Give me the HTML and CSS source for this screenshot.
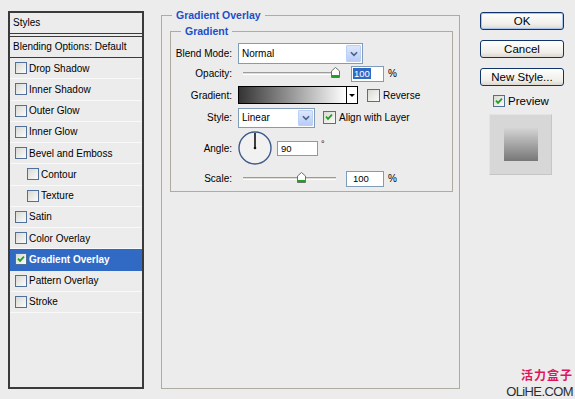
FILE: index.html
```html
<!DOCTYPE html>
<html lang="en">
<head>
    <meta charset="UTF-8">
    <meta name="viewport" content="width=device-width, initial-scale=1.0">
    <title>Layer Style</title>
    <link rel="stylesheet" href="styles.css">
</head>
<body>

    <div class="dialog">

        <!-- Lista de estilos -->
        <div class="styles-list">
            <div class="list-head">Styles</div>
            <div class="list-blend">Blending Options: Default</div>
            <div class="list-item"><span class="check"></span>Drop Shadow</div>
            <div class="list-item"><span class="check"></span>Inner Shadow</div>
            <div class="list-item"><span class="check"></span>Outer Glow</div>
            <div class="list-item"><span class="check"></span>Inner Glow</div>
            <div class="list-item"><span class="check"></span>Bevel and Emboss</div>
            <div class="list-item sub"><span class="check"></span>Contour</div>
            <div class="list-item sub"><span class="check"></span>Texture</div>
            <div class="list-item"><span class="check"></span>Satin</div>
            <div class="list-item"><span class="check"></span>Color Overlay</div>
            <div class="list-item active">
                <span class="check"><svg viewBox="0 0 11 11"><path d="M2.2 5.2 L4.4 7.6 L8.8 2.8" /></svg></span>Gradient Overlay
            </div>
            <div class="list-item"><span class="check"></span>Pattern Overlay</div>
            <div class="list-item"><span class="check"></span>Stroke</div>
        </div>

        <!-- Configurações -->
        <fieldset class="group outer">
            <legend>Gradient Overlay</legend>
            <fieldset class="group inner">
                <legend>Gradient</legend>

                <div class="row row-blend">
                    <label>Blend Mode:</label>
                    <div class="select select-blend">
                        <span>Normal</span>
                        <span class="drop"><svg viewBox="0 0 9 6"><path d="M1 1 L4.5 4.5 L8 1" /></svg></span>
                    </div>
                </div>

                <div class="row row-opacity">
                    <label>Opacity:</label>
                    <div class="slider">
                        <span class="track"></span>
                        <span class="thumb thumb-opacity"><svg viewBox="0 0 9 11"><polygon points="0.5,4 4.5,0.5 8.5,4 8.5,10.5 0.5,10.5" /><rect x="1" y="8" width="7" height="2" /></svg></span>
                    </div>
                    <div class="field field-opacity"><span class="selected">100</span></div>
                    <span class="unit">%</span>
                </div>

                <div class="row row-gradient">
                    <label>Gradient:</label>
                    <div class="gradient-box">
                        <span class="ramp"></span>
                        <span class="arrow"></span>
                    </div>
                    <span class="check reverse"></span>
                    <span>Reverse</span>
                </div>

                <div class="row row-style">
                    <label>Style:</label>
                    <div class="select select-style">
                        <span>Linear</span>
                        <span class="drop"><svg viewBox="0 0 9 6"><path d="M1 1 L4.5 4.5 L8 1" /></svg></span>
                    </div>
                    <span class="check align"><svg viewBox="0 0 11 11"><path d="M2.2 5.2 L4.4 7.6 L8.8 2.8" /></svg></span>
                    <span>Align with Layer</span>
                </div>

                <div class="row row-angle">
                    <label>Angle:</label>
                    <svg class="dial" viewBox="0 0 34 34">
                        <circle cx="17" cy="17" r="16" class="dial-ring" />
                        <line x1="17" y1="17" x2="17" y2="2" class="dial-hand" />
                        <circle cx="17" cy="17" r="1.3" class="dial-dot" />
                    </svg>
                    <div class="field field-angle">90</div>
                    <span class="deg">&deg;</span>
                </div>

                <div class="row row-scale">
                    <label>Scale:</label>
                    <div class="slider">
                        <span class="track"></span>
                        <span class="thumb thumb-scale"><svg viewBox="0 0 9 11"><polygon points="0.5,4 4.5,0.5 8.5,4 8.5,10.5 0.5,10.5" /><rect x="1" y="8" width="7" height="2" /></svg></span>
                    </div>
                    <div class="field field-scale">100</div>
                    <span class="unit">%</span>
                </div>

            </fieldset>
        </fieldset>

        <!-- Botões -->
        <div class="actions">
            <button class="btn btn-default">OK</button>
            <button class="btn">Cancel</button>
            <button class="btn">New Style...</button>
            <div class="preview-check">
                <span class="check"><svg viewBox="0 0 11 11"><path d="M2.2 5.2 L4.4 7.6 L8.8 2.8" /></svg></span>Preview
            </div>
            <div class="preview-box">
                <span class="swatch"></span>
            </div>
        </div>

    </div>

    <div class="watermark">
        <div class="wm-cn">活力盒子</div>
        <div class="wm-en">OLiHE.COM</div>
    </div>

</body>
</html>
```

FILE: styles.css
```css
* {
    margin: 0;
    padding: 0;
    box-sizing: border-box;
}

body {
    width: 575px;
    height: 399px;
    overflow: hidden;
    position: relative;
    background-color: #ececec;
    color: #000;
    font-family: "Liberation Sans", Arial, sans-serif;
    font-size: 10px;
}

.dialog {
    display: flex;
    align-items: stretch;
    padding: 9px 0 0 8px;
}

/* Lista de estilos */
.styles-list {
    width: 136px;
    height: 378px;
    margin-top: 2px;
    border: 2px solid #3a3a3a;
    display: flex;
    flex-direction: column;
}

.list-head {
    height: 21px;
    line-height: 20px;
    padding-left: 3px;
    border-bottom: 1px solid #3a3a3a;
}

.list-blend {
    height: 22px;
    margin-top: 2px;
    line-height: 20px;
    padding-left: 3px;
    border-top: 1px solid #3a3a3a;
    border-bottom: 1px solid #3a3a3a;
}

.list-item {
    height: 21.25px;
    display: flex;
    align-items: center;
    padding-left: 5px;
    border-bottom: 1px solid #f9f9f9;
}

.list-item.sub {
    padding-left: 17px;
}

.list-item.active {
    background-color: #316ac5;
    color: #fff;
    font-weight: bold;
    border-bottom-color: #316ac5;
}

.check {
    width: 12px;
    height: 12px;
    flex-shrink: 0;
    margin-right: 2px;
    border: 1px solid #50709a;
    background: linear-gradient(135deg, #d9d9d3, #fbfbfb);
    display: inline-flex;
}

.check svg {
    width: 10px;
    height: 10px;
}

.check path {
    fill: none;
    stroke: #21a121;
    stroke-width: 2;
}

/* Grupos */
.group {
    border: 1px solid #aeaba0;
}

.group legend {
    line-height: 13px;
    padding: 0 4px;
    color: #1d4fc9;
    font-weight: bold;
    font-size: 10.5px;
}

.outer {
    width: 299px;
    margin-left: 17px;
    padding: 3px 6px 0 8px;
}

.outer > legend {
    margin-left: 2px;
}

.inner {
    padding: 5px 0 4px 0;
}

.inner > legend {
    margin-left: 10px;
}

.row {
    display: flex;
    align-items: center;
}

.row label {
    width: 61px;
    margin-right: 6px;
    text-align: right;
}

.row-blend { height: 21px; }
.row-opacity { height: 17px; margin-top: 1px; }
.row-gradient { height: 18px; margin-top: 4px; }
.row-style { height: 21px; margin-top: 3px; }
.row-angle { height: 34px; margin-top: 3px; }
.row-scale { height: 17px; margin-top: 5px; }

.select {
    height: 100%;
    display: flex;
    align-items: center;
    justify-content: space-between;
    padding: 1px 1px 1px 3px;
    background-color: #fff;
    border: 1px solid #7f9db9;
}

.select-blend { width: 125px; }
.select-style { width: 77px; height: 20px; margin-right: 8px; }

.drop {
    width: 15px;
    height: 100%;
    display: flex;
    align-items: center;
    justify-content: center;
    border: 1px solid #bccff5;
    border-radius: 1px;
    background: linear-gradient(#dde7fd, #b7cdf8);
}

.drop svg {
    width: 8px;
    height: 6px;
}

.drop path {
    fill: none;
    stroke: #4d6185;
    stroke-width: 1.8;
}

.slider {
    position: relative;
    width: 104px;
    height: 100%;
}

.track {
    position: absolute;
    left: 5px;
    top: 7px;
    width: 93px;
    height: 3px;
    background-color: #dedbd3;
    border-top: 1px solid #9c9c9c;
    border-bottom: 1px solid #fff;
}

.thumb {
    position: absolute;
    top: 2px;
    width: 9px;
    height: 11px;
}

.thumb svg {
    display: block;
    width: 9px;
    height: 11px;
}

.thumb polygon {
    fill: #fff;
    stroke: #6f6f6f;
}

.thumb rect {
    fill: #21a121;
}

.thumb-opacity { left: 93px; }
.thumb-scale { left: 59px; }

.field {
    height: 16px;
    line-height: 14px;
    background-color: #fff;
    border: 1px solid #7f9db9;
    font-size: 9.5px;
}

.field-opacity {
    width: 33px;
    margin-left: 9px;
    padding-left: 1px;
}

.field-scale {
    width: 38px;
    margin-left: 4px;
    padding-left: 6px;
}

.field-angle {
    width: 41px;
    height: 15px;
    margin-left: 5px;
    padding-left: 3px;
}

.selected {
    background-color: #316ac5;
    color: #fff;
    padding: 0 1px;
}

.unit {
    margin-left: 4px;
}

.deg {
    align-self: flex-start;
    margin-top: 8px;
    margin-left: 3px;
    font-size: 9px;
}

.gradient-box {
    width: 120px;
    height: 100%;
    display: flex;
    border: 1px solid #000;
    margin-right: 9px;
}

.ramp {
    flex: 1;
    background: linear-gradient(to right, #343434, #fff);
}

.arrow {
    width: 11px;
    border-left: 1px solid #000;
    background-color: #fff;
    position: relative;
}

.arrow::after {
    content: '';
    position: absolute;
    left: 2px;
    top: 7px;
    border-left: 3px solid transparent;
    border-right: 3px solid transparent;
    border-top: 3px solid #000;
}

.reverse,
.align {
    width: 13px;
    height: 13px;
    margin-right: 3px;
}

.dial {
    width: 34px;
    height: 34px;
}

.dial-ring {
    fill: #f1f1f1;
    stroke: #3f5a88;
    stroke-width: 1.4;
}

.dial-hand {
    stroke: #111;
    stroke-width: 1.6;
}

.dial-dot {
    fill: #111;
}

/* Botões */
.actions {
    width: 84px;
    margin-left: 20px;
    margin-top: 3px;
    display: flex;
    flex-direction: column;
}

.btn {
    height: 18px;
    margin-bottom: 10px;
    border: 1px solid #10346a;
    border-radius: 3px;
    background: linear-gradient(#fefefe, #f0efea 70%, #dcd8ce);
    font-family: "Liberation Sans", Arial, sans-serif;
    font-size: 11.5px;
    color: #000;
}

.btn-default {
    box-shadow: inset 0 0 0 1px #aac4f0;
}

.preview-check {
    display: flex;
    align-items: center;
    margin: -2px 0 0 13px;
    height: 13px;
    font-size: 11.5px;
}

.preview-check .check {
    width: 12px;
    height: 12px;
    margin-right: 3px;
}

.preview-box {
    width: 63px;
    height: 61px;
    margin: 7px 0 0 9px;
    display: flex;
    align-items: center;
    justify-content: center;
    background-color: #d7d7d7;
    border: 1px solid #e4e4e4;
    border-right-color: #c6c6c6;
    border-bottom-color: #c6c6c6;
}

.swatch {
    width: 34px;
    height: 33px;
    background: linear-gradient(#d4d4d4, #777);
}

/* Marca d'água */
.watermark {
    position: absolute;
    right: 2px;
    bottom: 0;
    text-align: right;
}

.wm-cn {
    line-height: 18px;
    color: #e0145a;
    font-family: "Noto Sans CJK SC", sans-serif;
    font-weight: bold;
    font-size: 12px;
    letter-spacing: 1px;
}

.wm-en {
    line-height: 15px;
    color: #2e2e2e;
    font-family: "Liberation Sans", Arial, sans-serif;
    font-size: 13px;
    letter-spacing: -0.6px;
}
```
